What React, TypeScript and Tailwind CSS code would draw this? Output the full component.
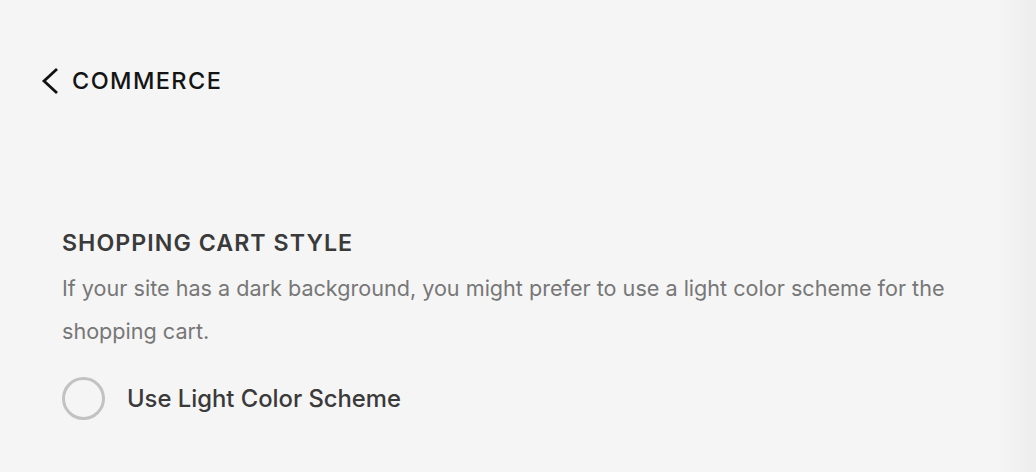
import React from "react";

export default function App() {
  return (
    <div
      className="w-[1036px] h-[472px] overflow-hidden bg-[#f5f5f5] relative"
      style={{ fontFamily: "Inter, 'Noto Sans', sans-serif" }}
    >
      <div className="absolute right-0 top-0 h-full w-[40px] bg-gradient-to-r from-[#f5f5f5] to-[#ededed]" />
      <div className="relative flex flex-col">
        <div className="flex items-center gap-[12px] pl-[38px] pt-[67px] h-[95px]">
          <svg width="22" height="28" viewBox="0 0 22 28" fill="none">
            <path d="M19 2 L6 14 L19 26" stroke="#111" strokeWidth="2.8" />
          </svg>
          <span className="text-[23.5px] font-medium tracking-[0.06em] text-[#141414] leading-[28px]">
            COMMERCE
          </span>
        </div>
        <div className="pl-[62px] pt-[134px] pr-[60px]">
          <h2 className="text-[23.2px] font-semibold tracking-[0.045em] text-[#3a3a3a] leading-[28px]">
            SHOPPING CART STYLE
          </h2>
          <p className="mt-[10px] w-[900px] text-[21.6px] leading-[43px] text-[#777777]">
            If your site has a dark background, you might prefer to use a light color scheme for the shopping cart.
          </p>
          <div className="mt-[24px] flex items-center gap-[22px] h-[43px]">
            <div className="w-[43px] h-[43px] rounded-full border-[3px] border-[#c2c2c2]" />
            <span className="text-[23.8px] font-medium text-[#3a3a3a] leading-[28px]">Use Light Color Scheme</span>
          </div>
        </div>
      </div>
    </div>
  );
}
